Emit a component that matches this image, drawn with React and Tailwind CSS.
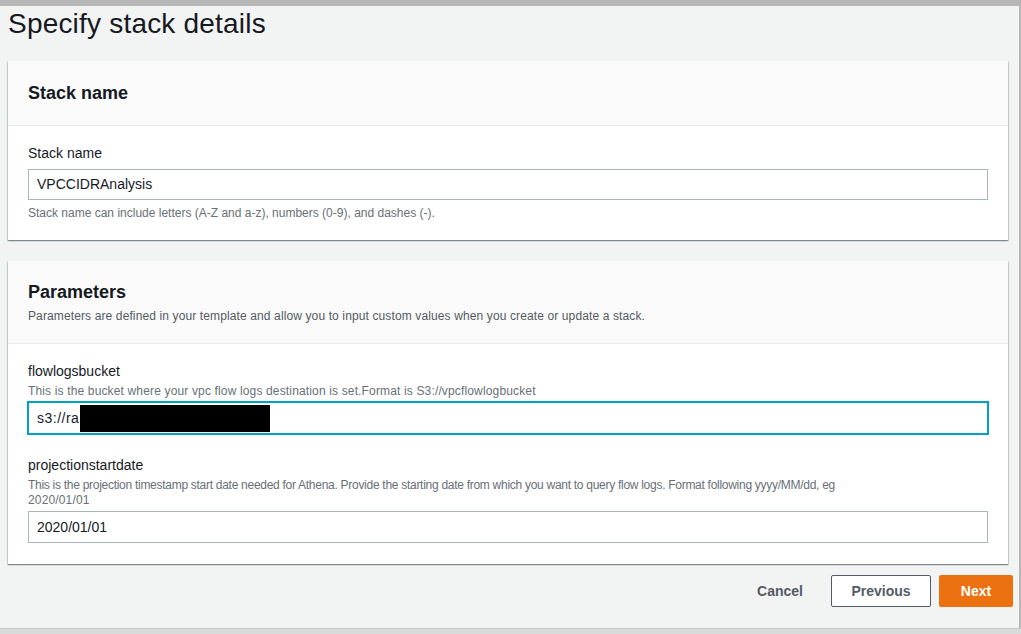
import React from 'react';

const font = { fontFamily: '"Liberation Sans", Arial, sans-serif' };

function Card({ title, description, headerPad, bodyPad, children }) {
  return (
    <div className="mr-[5px] bg-white shadow-[0_1px_1px_0_rgba(0,28,36,0.3),1px_1px_1px_0_rgba(0,28,36,0.15),-1px_1px_1px_0_rgba(0,28,36,0.15)]">
      <div className={'bg-[#fafafa] border-b border-[#eaeded] px-5 ' + headerPad}>
        <h2 className="text-[18px] leading-[22px] font-bold text-[#16191f]">{title}</h2>
        {description && (
          <p className="mt-[5px] text-[12px] leading-[16px] text-[#545b64] tracking-[0.12px]">{description}</p>
        )}
      </div>
      <div className={'px-5 ' + bodyPad}>{children}</div>
    </div>
  );
}

function Field({ label, hint, hintClass, value, focused, className }) {
  return (
    <div className={className}>
      <label className="block text-[14px] leading-[20px] text-[#16191f]">{label}</label>
      <p className={'mt-[3px] text-[12px] leading-[15px] text-[#687078] ' + hintClass}>{hint}</p>
      <div
        className={
          'mt-[3px] h-[32px] flex items-center px-[8px] bg-white text-[14px] text-[#16191f] ' +
          (focused
            ? 'border border-[#00a1c9] shadow-[0_0_0_1px_#00a1c9]'
            : 'border border-[#aab7b8]')
        }
      >
        {value}
      </div>
    </div>
  );
}

export default function App() {
  return (
    <div className="w-[1021px] h-[634px] bg-[#f2f3f3] overflow-hidden flex flex-col" style={font}>
      <div className="h-[6px] bg-[#b6b7b6] shrink-0" />
      <div className="flex flex-1 min-h-0">
        <div className="flex-1 pl-[8px] pr-[6px] flex flex-col">
          <h1 className="pt-[1px] text-[28px] leading-[34px] text-[#16191f] tracking-[0.2px]">Specify stack details</h1>

          <div className="mt-[20px]">
            <Card title="Stack name" headerPad="pt-[21px] pb-[21px]" bodyPad="pt-[17px] pb-[19px]">
              <label className="block text-[14px] leading-[20px] text-[#16191f]">Stack name</label>
              <div className="mt-[6px] h-[31px] flex items-center px-[8px] border border-[#aab7b8] text-[14px] text-[#16191f]">
                VPCCIDRAnalysis
              </div>
              <p className="mt-[5px] text-[12px] leading-[16px] text-[#687078]">
                Stack name can include letters (A-Z and a-z), numbers (0-9), and dashes (-).
              </p>
            </Card>
          </div>

          <div className="mt-[21px]">
            <Card
              title="Parameters"
              description="Parameters are defined in your template and allow you to input custom values when you create or update a stack."
              headerPad="pt-[20px] pb-[19px]"
              bodyPad="pt-[17px] pb-[21px]"
            >
              <Field
                label="flowlogsbucket"
                hint="This is the bucket where your vpc flow logs destination is set.Format is S3://vpcflowlogbucket"
                hintClass="tracking-[0.15px]"
                focused
                value={
                  <span className="flex items-center">
                    <span className="tracking-[0.5px]">s3://ra</span>
                    <span className="ml-[1px] inline-block w-[190px] h-[27px] bg-black" />
                  </span>
                }
              />
              <Field
                className="mt-[21px]"
                label="projectionstartdate"
                hintClass="tracking-[-0.28px]"
                hint={
                  <>
                    This is the projection timestamp start date needed for Athena. Provide the starting date from which you want to query flow logs. Format following yyyy/MM/dd, eg
                    <br />
                    <span className="tracking-[0.15px]">2020/01/01</span>
                  </>
                }
                value="2020/01/01"
              />
            </Card>
          </div>

          <div className="mt-[11px] flex justify-end items-center gap-[8px]">
            <button className="h-[32px] px-[20px] text-[14px] font-bold text-[#545b64]">Cancel</button>
            <button className="h-[32px] w-[100px] border border-[#545b64] rounded-[2px] bg-white text-[14px] font-bold text-[#545b64]">
              Previous
            </button>
            <button className="h-[32px] w-[74px] rounded-[2px] bg-[#ec7211] text-[14px] font-bold text-white">
              Next
            </button>
          </div>
        </div>
        <div className="w-[2px] bg-[#b6b7b6] shrink-0" />
      </div>
      <div className="h-[6px] bg-[#d9dada] border-t border-[#c6c8c8] shrink-0" />
    </div>
  );
}
